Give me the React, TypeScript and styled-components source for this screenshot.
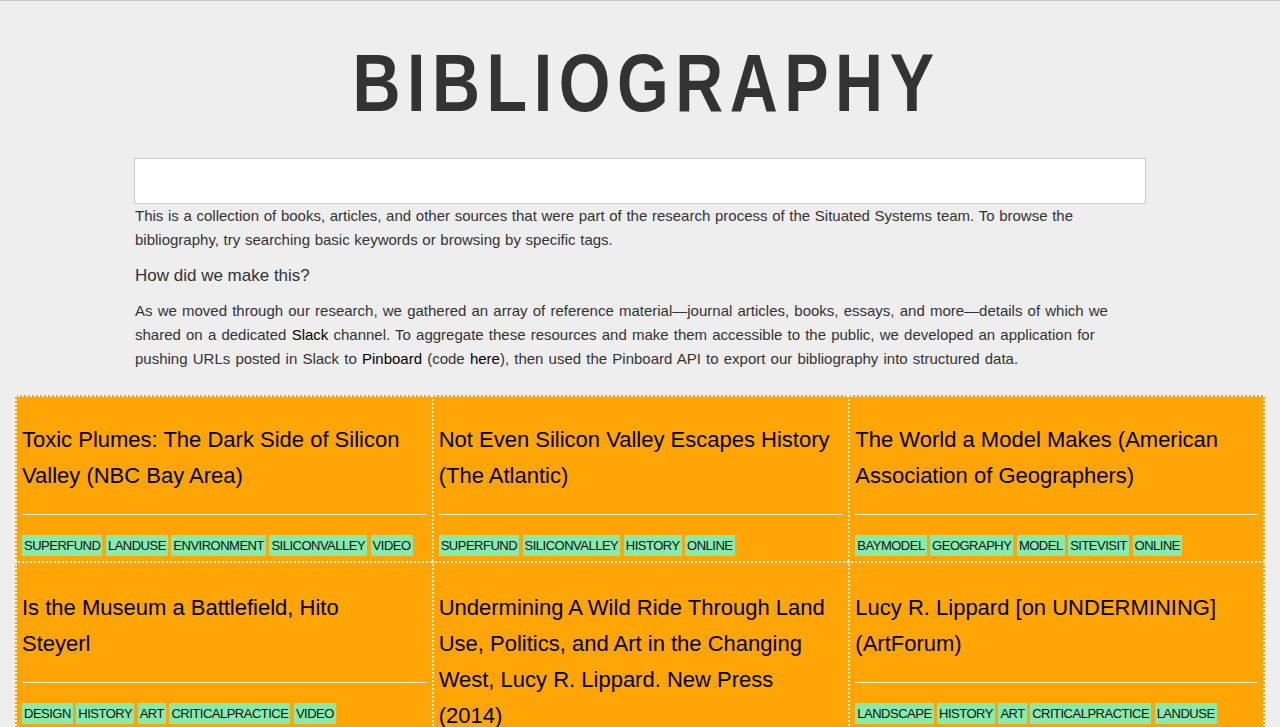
import React from "react";
import styled, { createGlobalStyle } from "styled-components";

const GlobalStyle = createGlobalStyle`
  html, body {
    margin: 0;
    padding: 0;
  }
  body {
    background: #eeeeee;
    border-top: 1px solid #c6c6c6;
    font-family: "Liberation Sans", Arial, sans-serif;
    color: #333333;
  }
`;

const Page = styled.div`
  display: flex;
  flex-direction: column;
  align-items: center;
`;

const Title = styled.h1`
  margin: 42px 0 34px;
  font-family: "Liberation Sans", Arial, sans-serif;
  font-weight: 700;
  font-size: 81px;
  line-height: 81px;
  color: #333333;
  display: flex;
  justify-content: center;
`;

const TitleText = styled.span`
  display: inline-block;
  letter-spacing: 8px;
  margin-right: -8px;
  transform: scaleX(0.82);
  transform-origin: center;
  margin-left: 5px;
`;

const Intro = styled.section`
  width: 1012px;
  display: flex;
  flex-direction: column;
`;

const Search = styled.input`
  box-sizing: border-box;
  width: 100%;
  height: 46px;
  margin: 0;
  border: 1px solid #cccccc;
  background: #ffffff;
  outline: none;
  font-family: "Liberation Sans", Arial, sans-serif;
  font-size: 16px;
  padding: 0 10px;
`;

const Para = styled.p<{ $spacing: number }>`
  margin: 0;
  padding: 0 1px;
  font-size: 15px;
  line-height: 24px;
  word-spacing: ${(p) => p.$spacing}px;
  color: #333333;
`;

const SubHead = styled.h4`
  margin: 12px 0 11px;
  padding: 0 1px;
  font-size: 17px;
  line-height: 24px;
  font-weight: 400;
  color: #333333;
`;

const Link = styled.a`
  color: #000000;
  text-decoration: none;
`;

const Grid = styled.div`
  box-sizing: border-box;
  width: 1250px;
  margin-top: 24px;
  display: grid;
  grid-template-columns: repeat(3, 1fr);
`;

const Card = styled.article<{ $last: boolean }>`
  box-sizing: border-box;
  min-width: 0;
  background: #ffa506;
  border-top: 2px dotted #fff1d4;
  border-left: 2px dotted #fff1d4;
  border-right: ${(p) => (p.$last ? "2px dotted #fff1d4" : "0")};
  padding: 0 5px 5px;
  display: flex;
  flex-direction: column;
`;

const CardTitle = styled.h3<{ $firstRow: boolean }>`
  margin: ${(p) => (p.$firstRow ? 25 : 27)}px 0 20px;
  font-size: 22px;
  line-height: 36px;
  font-weight: 400;
  color: #000000;
`;

const Rule = styled.hr`
  margin: 0 0 20px;
  border: 0;
  border-top: 1px solid #fff1d4;
  height: 0;
`;

const Tags = styled.div`
  display: flex;
  flex-wrap: wrap;
  gap: 4px 3.5px;
`;

const Tag = styled.span`
  display: inline-block;
  height: 21px;
  line-height: 21px;
  padding: 0 2px;
  background: #86ebad;
  color: #111111;
  font-size: 13px;
  letter-spacing: -0.5px;
  text-transform: uppercase;
`;

type Entry = { title: React.ReactNode; tags: string[] };

const entries: Entry[] = [
  {
    title: "Toxic Plumes: The Dark Side of Silicon Valley (NBC Bay Area)",
    tags: ["superfund", "landuse", "environment", "siliconvalley", "video"],
  },
  {
    title: "Not Even Silicon Valley Escapes History (The Atlantic)",
    tags: ["superfund", "siliconvalley", "history", "online"],
  },
  {
    title: "The World a Model Makes (American Association of Geographers)",
    tags: ["baymodel", "geography", "model", "sitevisit", "online"],
  },
  {
    title: (
      <>
        Is the Museum a Battlefield, Hito
        <br />
        Steyerl
      </>
    ),
    tags: ["design", "history", "art", "criticalpractice", "video"],
  },
  {
    title: (
      <>
        Undermining A Wild Ride Through Land Use, Politics, and Art in the Changing West, Lucy
        R. Lippard. New Press
        <br />
        (2014)
      </>
    ),
    tags: ["landuse", "art", "history", "book"],
  },
  {
    title: "Lucy R. Lippard [on UNDERMINING] (ArtForum)",
    tags: ["landscape", "history", "art", "criticalpractice", "landuse"],
  },
];

export default function App() {
  return (
    <>
      <GlobalStyle />
      <Page>
        <Title>
          <TitleText>BIBLIOGRAPHY</TitleText>
        </Title>
        <Intro>
          <Search type="text" aria-label="Search" />
          <Para $spacing={0.5}>
            This is a collection of books, articles, and other sources that were part of the
            research process of the Situated Systems team. To browse the bibliography, try
            searching basic keywords or browsing by specific tags.
          </Para>
          <SubHead>How did we make this?</SubHead>
          <Para $spacing={1}>
            As we moved through our research, we gathered an array of reference material—journal
            articles, books, essays, and more—details of which we shared on a dedicated{" "}
            <Link href="#">Slack</Link> channel. To aggregate these resources and make them
            accessible to the public, we developed an application for pushing URLs posted in Slack
            to <Link href="#">Pinboard</Link> (code <Link href="#">here</Link>), then used the
            Pinboard API to export our bibliography into structured data.
          </Para>
        </Intro>
        <Grid>
          {entries.map((e, i) => (
            <Card key={i} $last={i % 3 === 2}>
              <CardTitle $firstRow={i < 3}>{e.title}</CardTitle>
              <Rule />
              <Tags>
                {e.tags.map((t) => (
                  <Tag key={t}>{t}</Tag>
                ))}
              </Tags>
            </Card>
          ))}
        </Grid>
      </Page>
    </>
  );
}
